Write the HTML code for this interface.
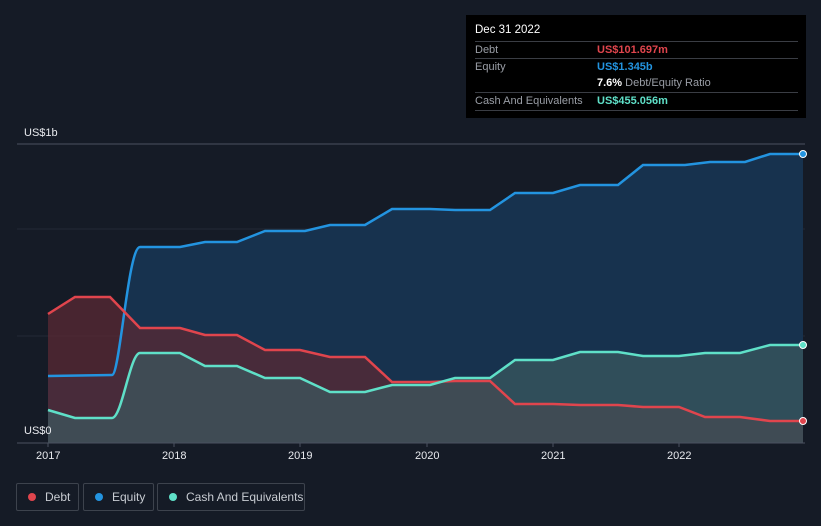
<!DOCTYPE html>
<html><head><style>
body{margin:0;width:821px;height:526px;background:#151b26;font-family:"Liberation Sans",sans-serif;overflow:hidden;position:relative}
.tip{position:absolute;left:466px;top:15px;width:340px;height:103px;background:#000;color:#fff;font-size:11px}
.tip .h{position:absolute;left:9px;top:9px;font-size:11.5px}
.row{position:absolute;left:9px;width:323px;border-top:1px solid #3a3d44;height:17px;line-height:17px}
.row .l{color:#9a9ea6;position:absolute;left:0}
.row .v{position:absolute;left:122px;font-weight:bold}
.leg{position:absolute;top:483px;height:26px;border:1px solid #3d434d;border-radius:2px;color:#c8ccd2;font-size:12px;line-height:26px}
.leg i{position:absolute;left:11px;top:9px;width:8px;height:8px;border-radius:50%}
.ax{position:absolute;top:450px;color:#e8eaee;font-size:11px}
</style></head><body>
<svg width="821" height="526" style="position:absolute;left:0;top:0">
<line x1="17" y1="144" x2="805" y2="144" stroke="#4a5160" stroke-width="1"/>
<line x1="17" y1="229" x2="805" y2="229" stroke="#232a36"/>
<line x1="17" y1="336" x2="805" y2="336" stroke="#232a36"/>
<path d="M48,376 L112,375 C120,375 128,247 140,247 L180,247 L205,242 L237,242 L265,231 L305,231 L330,225 L365,225 L392,209 L430,209 L455,210 L490,210 L515,193 L553,193 L580,185 L618,185 L643,165 L685,165 L710,162 L745,162 L770,154 L803,154 L803,443 L48,443Z" fill="#17324e"/>
<path d="M48,314 L75,297 L110,297 L140,328 L180,328 L205,335 L237,335 L265,350 L300,350 L330,357 L365,357 L392,382 L430,382 L455,381 L490,381 L515,404 L553,404 L580,405 L618,405 L643,407 L679,407 L705,417 L740,417 L770,421 L803,421 L803,443 L48,443Z" fill="#5a2a34" opacity="0.75"/>
<path d="M48,410 L75,418 L112,418 C122,418 130,353 140,353 L180,353 L205,366 L237,366 L265,378 L300,378 L330,392 L365,392 L392,385 L430,385 L455,378 L490,378 L515,360 L553,360 L580,352 L618,352 L643,356 L679,356 L705,353 L740,353 L770,345 L803,345 L803,443 L48,443Z" fill="#3c5a60" opacity="0.7"/>
<path d="M48,376 L112,375 C120,375 128,247 140,247 L180,247 L205,242 L237,242 L265,231 L305,231 L330,225 L365,225 L392,209 L430,209 L455,210 L490,210 L515,193 L553,193 L580,185 L618,185 L643,165 L685,165 L710,162 L745,162 L770,154 L803,154" fill="none" stroke="#2394e0" stroke-width="2.5"/>
<path d="M48,314 L75,297 L110,297 L140,328 L180,328 L205,335 L237,335 L265,350 L300,350 L330,357 L365,357 L392,382 L430,382 L455,381 L490,381 L515,404 L553,404 L580,405 L618,405 L643,407 L679,407 L705,417 L740,417 L770,421 L803,421" fill="none" stroke="#e0454d" stroke-width="2.5"/>
<path d="M48,410 L75,418 L112,418 C122,418 130,353 140,353 L180,353 L205,366 L237,366 L265,378 L300,378 L330,392 L365,392 L392,385 L430,385 L455,378 L490,378 L515,360 L553,360 L580,352 L618,352 L643,356 L679,356 L705,353 L740,353 L770,345 L803,345" fill="none" stroke="#5fe0c8" stroke-width="2.5"/>
<line x1="17" y1="443" x2="805" y2="443" stroke="#4a5160"/>
<g stroke="#4a5160"><line x1="48" y1="443" x2="48" y2="447"/><line x1="174" y1="443" x2="174" y2="447"/><line x1="300" y1="443" x2="300" y2="447"/><line x1="427" y1="443" x2="427" y2="447"/><line x1="553" y1="443" x2="553" y2="447"/><line x1="679" y1="443" x2="679" y2="447"/></g>
<circle cx="803" cy="154" r="3.5" fill="#2394e0" stroke="#fff" stroke-width="1"/>
<circle cx="803" cy="345" r="3.5" fill="#5fe0c8" stroke="#fff" stroke-width="1"/>
<circle cx="803" cy="421" r="3.5" fill="#e0454d" stroke="#fff" stroke-width="1"/>
</svg>
<div style="position:absolute;left:24px;top:127px;color:#e8eaee;font-size:11px">US$1b</div>
<div style="position:absolute;left:24px;top:425px;color:#e8eaee;font-size:11px">US$0</div>
<div class="ax" style="left:36px">2017</div><div class="ax" style="left:162px">2018</div><div class="ax" style="left:288px">2019</div><div class="ax" style="left:415px">2020</div><div class="ax" style="left:541px">2021</div><div class="ax" style="left:667px">2022</div>
<div class="tip">
<div class="h">Dec 31 2022</div>
<div class="row" style="top:26px"><span class="l">Debt</span><span class="v" style="color:#e0454d">US$101.697m</span></div>
<div class="row" style="top:43px"><span class="l">Equity</span><span class="v" style="color:#2394e0">US$1.345b</span></div>
<div class="row" style="top:60px;border-top:none"><span class="v" style="color:#fff">7.6% <span style="font-weight:normal;color:#9a9ea6">Debt/Equity Ratio</span></span></div>
<div class="row" style="top:77px"><span class="l">Cash And Equivalents</span><span class="v" style="color:#5fe0c8">US$455.056m</span></div>
<div class="row" style="top:95px;height:0"></div>
</div>
<div class="leg" style="left:16px;width:61px"><i style="background:#e0454d"></i><span style="position:absolute;left:28px">Debt</span></div>
<div class="leg" style="left:83px;width:69px"><i style="background:#2394e0"></i><span style="position:absolute;left:28px">Equity</span></div>
<div class="leg" style="left:157px;width:146px"><i style="background:#5fe0c8"></i><span style="position:absolute;left:28px">Cash And Equivalents</span></div>
</body></html>
